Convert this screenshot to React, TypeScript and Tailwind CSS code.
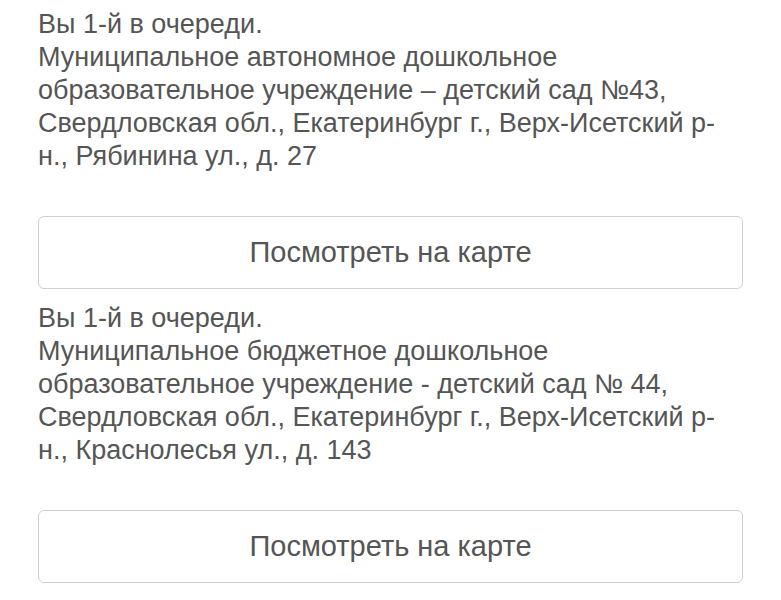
const ITEMS = [
  {
    title: 'Вы 1-й в очереди.',
    text: 'Муниципальное автономное дошкольное образовательное учреждение – детский сад №43, Свердловская обл., Екатеринбург г., Верх-Исетский р-н., Рябинина ул., д. 27',
  },
  {
    title: 'Вы 1-й в очереди.',
    text: 'Муниципальное бюджетное дошкольное образовательное учреждение - детский сад № 44, Свердловская обл., Екатеринбург г., Верх-Исетский р-н., Краснолесья ул., д. 143',
  },
]

export default function App() {
  return (
    <div className="min-h-[600px] bg-white px-[38px] pt-[8px] font-['Liberation_Sans',Arial,sans-serif] text-[#555]">
      {ITEMS.map((item, i) => (
        <div key={i}>
          <p className="text-[27px] leading-[33px]">{item.title}</p>
          <p className="text-[27px] leading-[33px]">{item.text}</p>
          <button className="mt-[43px] mb-[13px] flex h-[73px] w-full items-center justify-center rounded-[6px] border border-[#cfcfcf] bg-white text-[29px] text-[#555]">
            Посмотреть на карте
          </button>
        </div>
      ))}
    </div>
  )
}
